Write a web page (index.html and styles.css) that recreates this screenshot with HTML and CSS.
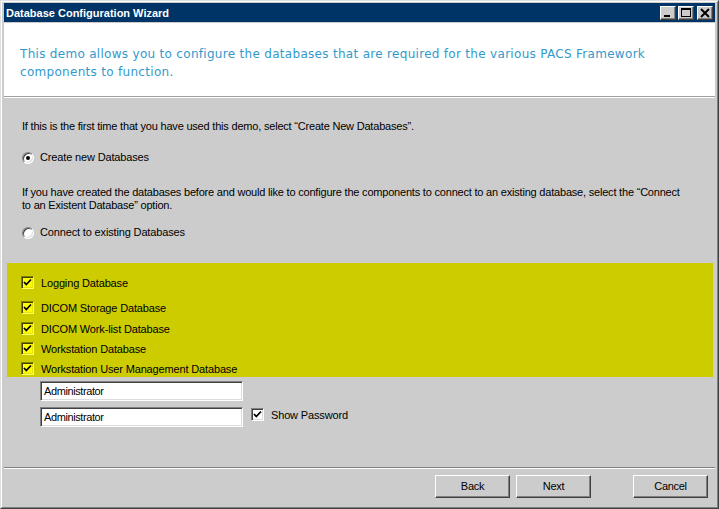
FILE: index.html
```html
<!DOCTYPE html>
<html>
<head>
<meta charset="utf-8">
<link rel="stylesheet" href="styles.css">
</head>
<body>
<div class="window">
  <div class="frame">
    <div class="titlebar">
      <span class="title">Database Configuration Wizard</span>
      <div class="tbuttons">
        <span class="tbtn"><svg width="14" height="12" viewBox="0 0 14 12"><rect x="3" y="8" width="6" height="2" fill="#000"/></svg></span>
        <span class="tbtn"><svg width="14" height="12" viewBox="0 0 14 12"><rect x="2.5" y="1.5" width="9" height="8" fill="none" stroke="#000"/><rect x="2" y="1" width="10" height="2" fill="#000"/></svg></span>
        <span class="tbtn close"><svg width="14" height="12" viewBox="0 0 14 12"><path d="M3 2 L11 10 M11 2 L3 10" stroke="#000" stroke-width="2"/></svg></span>
      </div>
    </div>
    <div class="header">
      <p class="intro">This demo allows you to configure the databases that are required for the various PACS Framework components to function.</p>
    </div>
    <div class="main">
      <p class="para p1">If this is the first time that you have used this demo, select “Create New Databases”.</p>
      <div class="radio-row r1"><span class="radio checked"></span><span class="lbl">Create new Databases</span></div>
      <p class="para p2">If you have created the databases before and would like to configure the components to connect to an existing database, select the “Connect to an Existent Database” option.</p>
      <div class="radio-row r2"><span class="radio"></span><span class="lbl">Connect to existing Databases</span></div>
      <div class="yellow">
        <div class="cb-row c1"><span class="cb yel"><svg width="9" height="9" viewBox="0 0 9 9"><polyline points="1,4 3.3,6.5 8,1.5" fill="none" stroke="#000" stroke-width="1.8"/></svg></span><span class="lbl">Logging Database</span></div>
        <div class="cb-row c2"><span class="cb yel"><svg width="9" height="9" viewBox="0 0 9 9"><polyline points="1,4 3.3,6.5 8,1.5" fill="none" stroke="#000" stroke-width="1.8"/></svg></span><span class="lbl">DICOM Storage Database</span></div>
        <div class="cb-row c3"><span class="cb yel"><svg width="9" height="9" viewBox="0 0 9 9"><polyline points="1,4 3.3,6.5 8,1.5" fill="none" stroke="#000" stroke-width="1.8"/></svg></span><span class="lbl">DICOM Work-list Database</span></div>
        <div class="cb-row c4"><span class="cb yel"><svg width="9" height="9" viewBox="0 0 9 9"><polyline points="1,4 3.3,6.5 8,1.5" fill="none" stroke="#000" stroke-width="1.8"/></svg></span><span class="lbl">Workstation Database</span></div>
        <div class="cb-row c5"><span class="cb yel"><svg width="9" height="9" viewBox="0 0 9 9"><polyline points="1,4 3.3,6.5 8,1.5" fill="none" stroke="#000" stroke-width="1.8"/></svg></span><span class="lbl">Workstation User Management Database</span></div>
      </div>
      <div class="field-row f1"><span class="textbox">Administrator</span></div>
      <div class="field-row f2"><span class="textbox">Administrator</span><span class="cb wht"><svg width="9" height="9" viewBox="0 0 9 9"><polyline points="1,4 3.3,6.5 8,1.5" fill="none" stroke="#000" stroke-width="1.8"/></svg></span><span class="lbl show">Show Password</span></div>
    </div>
    <div class="footer">
      <span class="btn">Back</span>
      <span class="btn">Next</span>
      <span class="btn cancel">Cancel</span>
    </div>
  </div>
</div>
</body>
</html>
```
FILE: styles.css
```css
html, body { margin: 0; padding: 0; }
body { background: #cccccc; font-family: "Liberation Sans", Arial, sans-serif; }
p { margin: 0; }

.window {
  width: 719px; height: 509px; box-sizing: border-box;
  border: 1px solid; border-color: #dfdfdf #404040 #404040 #dfdfdf;
}
.frame {
  height: 100%; box-sizing: border-box;
  border: 1px solid; border-color: #ffffff #808080 #808080 #ffffff;
  padding: 1px 2px 2px 2px;
  background: #cccccc;
  display: flex; flex-direction: column;
}
.titlebar {
  height: 19px; background: #003366; margin-bottom: 1px;
  display: flex; align-items: center; justify-content: space-between;
  padding: 0 2px 0 2px;
}
.title { color: #fff; font-weight: bold; font-size: 11px; letter-spacing: 0; }
.tbuttons { display: flex; gap: 2px; }
.tbuttons .close { margin-left: 1px; }
.tbtn {
  width: 16px; height: 14px; box-sizing: border-box; background: #cccccc;
  border: 1px solid; border-color: #ffffff #404040 #404040 #ffffff;
  box-shadow: inset -1px -1px #808080;
  display: flex; align-items: center; justify-content: center;
}
.tbtn svg { display: block; }

.header {
  height: 74px; background: #ffffff; box-sizing: border-box;
  padding: 22px 16px 0 16px;
  border-bottom: 1px solid #a0a0a0;
  box-shadow: 0 1px 0 #ffffff;
}
.intro {
  color: #3399cc; font-family: "DejaVu Sans", sans-serif; font-size: 12px; line-height: 18px;
  letter-spacing: 0.3px;
}

.main { flex: 1; margin-top: 2px; font-size: 11px; line-height: 13px; color: #000; }
.para { padding-left: 18px; padding-right: 32px; letter-spacing: -0.2px; }
.p1 { margin-top: 21px; }
.p2 { margin-top: 22px; }
.lbl { letter-spacing: -0.15px; }

.radio-row { display: flex; align-items: center; padding-left: 18px; height: 13px; }
.r1 { margin-top: 18px; }
.r2 { margin-top: 14px; }
.radio {
  width: 12px; height: 12px; box-sizing: border-box; border-radius: 50%;
  background: #fff; margin-right: 6px;
  border: 1px solid; border-color: #808080 #ffffff #ffffff #808080;
  box-shadow: inset 1px 1px #404040, inset -1px -1px #dcdcdc;
  position: relative;
}
.radio.checked::after {
  content: ""; position: absolute; left: 3px; top: 3px; width: 4px; height: 4px;
  border-radius: 50%; background: #000;
}

.yellow {
  background: #cccc00; margin: 24px 2px 0 3px;
  padding: 13px 0 2px 14px;
}
.cb-row { display: flex; align-items: center; height: 13px; }
.cb-row .lbl { padding-top: 1px; }
.c2 { margin-top: 12px; }
.c3 { margin-top: 8px; }
.c4 { margin-top: 7px; }
.c5 { margin-top: 7px; }
.cb {
  width: 13px; height: 13px; box-sizing: border-box; flex: none;
  border: 1px solid; border-color: #808080 #ffffff #ffffff #808080;
  box-shadow: inset 1px 1px #404040, inset -1px -1px #dcdcdc;
  display: flex; align-items: center; justify-content: center;
  margin-right: 7px;
}
.cb svg { display: block; }
.cb.yel { background: #ffff00; border-color: #808000 #ffff66 #ffff66 #808000; box-shadow: inset 1px 1px #404000, inset -1px -1px #e6e600; }
.cb.wht { background: #ffffff; margin-left: 8px; margin-top: 1px; }

.field-row { display: flex; align-items: flex-start; padding-left: 36px; }
.f1 { margin-top: 4px; }
.f2 { margin-top: 6px; }
.show { margin-top: 2px; }
.textbox {
  width: 203px; height: 20px; box-sizing: border-box; background: #fff;
  border: 1px solid; border-color: #808080 #ffffff #ffffff #808080;
  box-shadow: inset 1px 1px #404040, inset -1px -1px #dcdcdc;
  padding: 3px 0 0 3px; line-height: 13px; letter-spacing: -0.4px;
}

.footer {
  height: 38px; box-sizing: border-box; flex: none;
  border-top: 1px solid #808080; box-shadow: inset 0 1px #ffffff;
  padding: 7px 7px 7px 0;
  display: flex; justify-content: flex-end; gap: 6px;
}
.btn {
  width: 75px; height: 23px; box-sizing: border-box; background: #cccccc;
  border: 1px solid; border-color: #ffffff #404040 #404040 #ffffff;
  box-shadow: inset -1px -1px #808080;
  font-size: 11px; line-height: 21px; text-align: center; color: #000;
  letter-spacing: -0.3px;
}
.btn.cancel { margin-left: 36px; }
```
